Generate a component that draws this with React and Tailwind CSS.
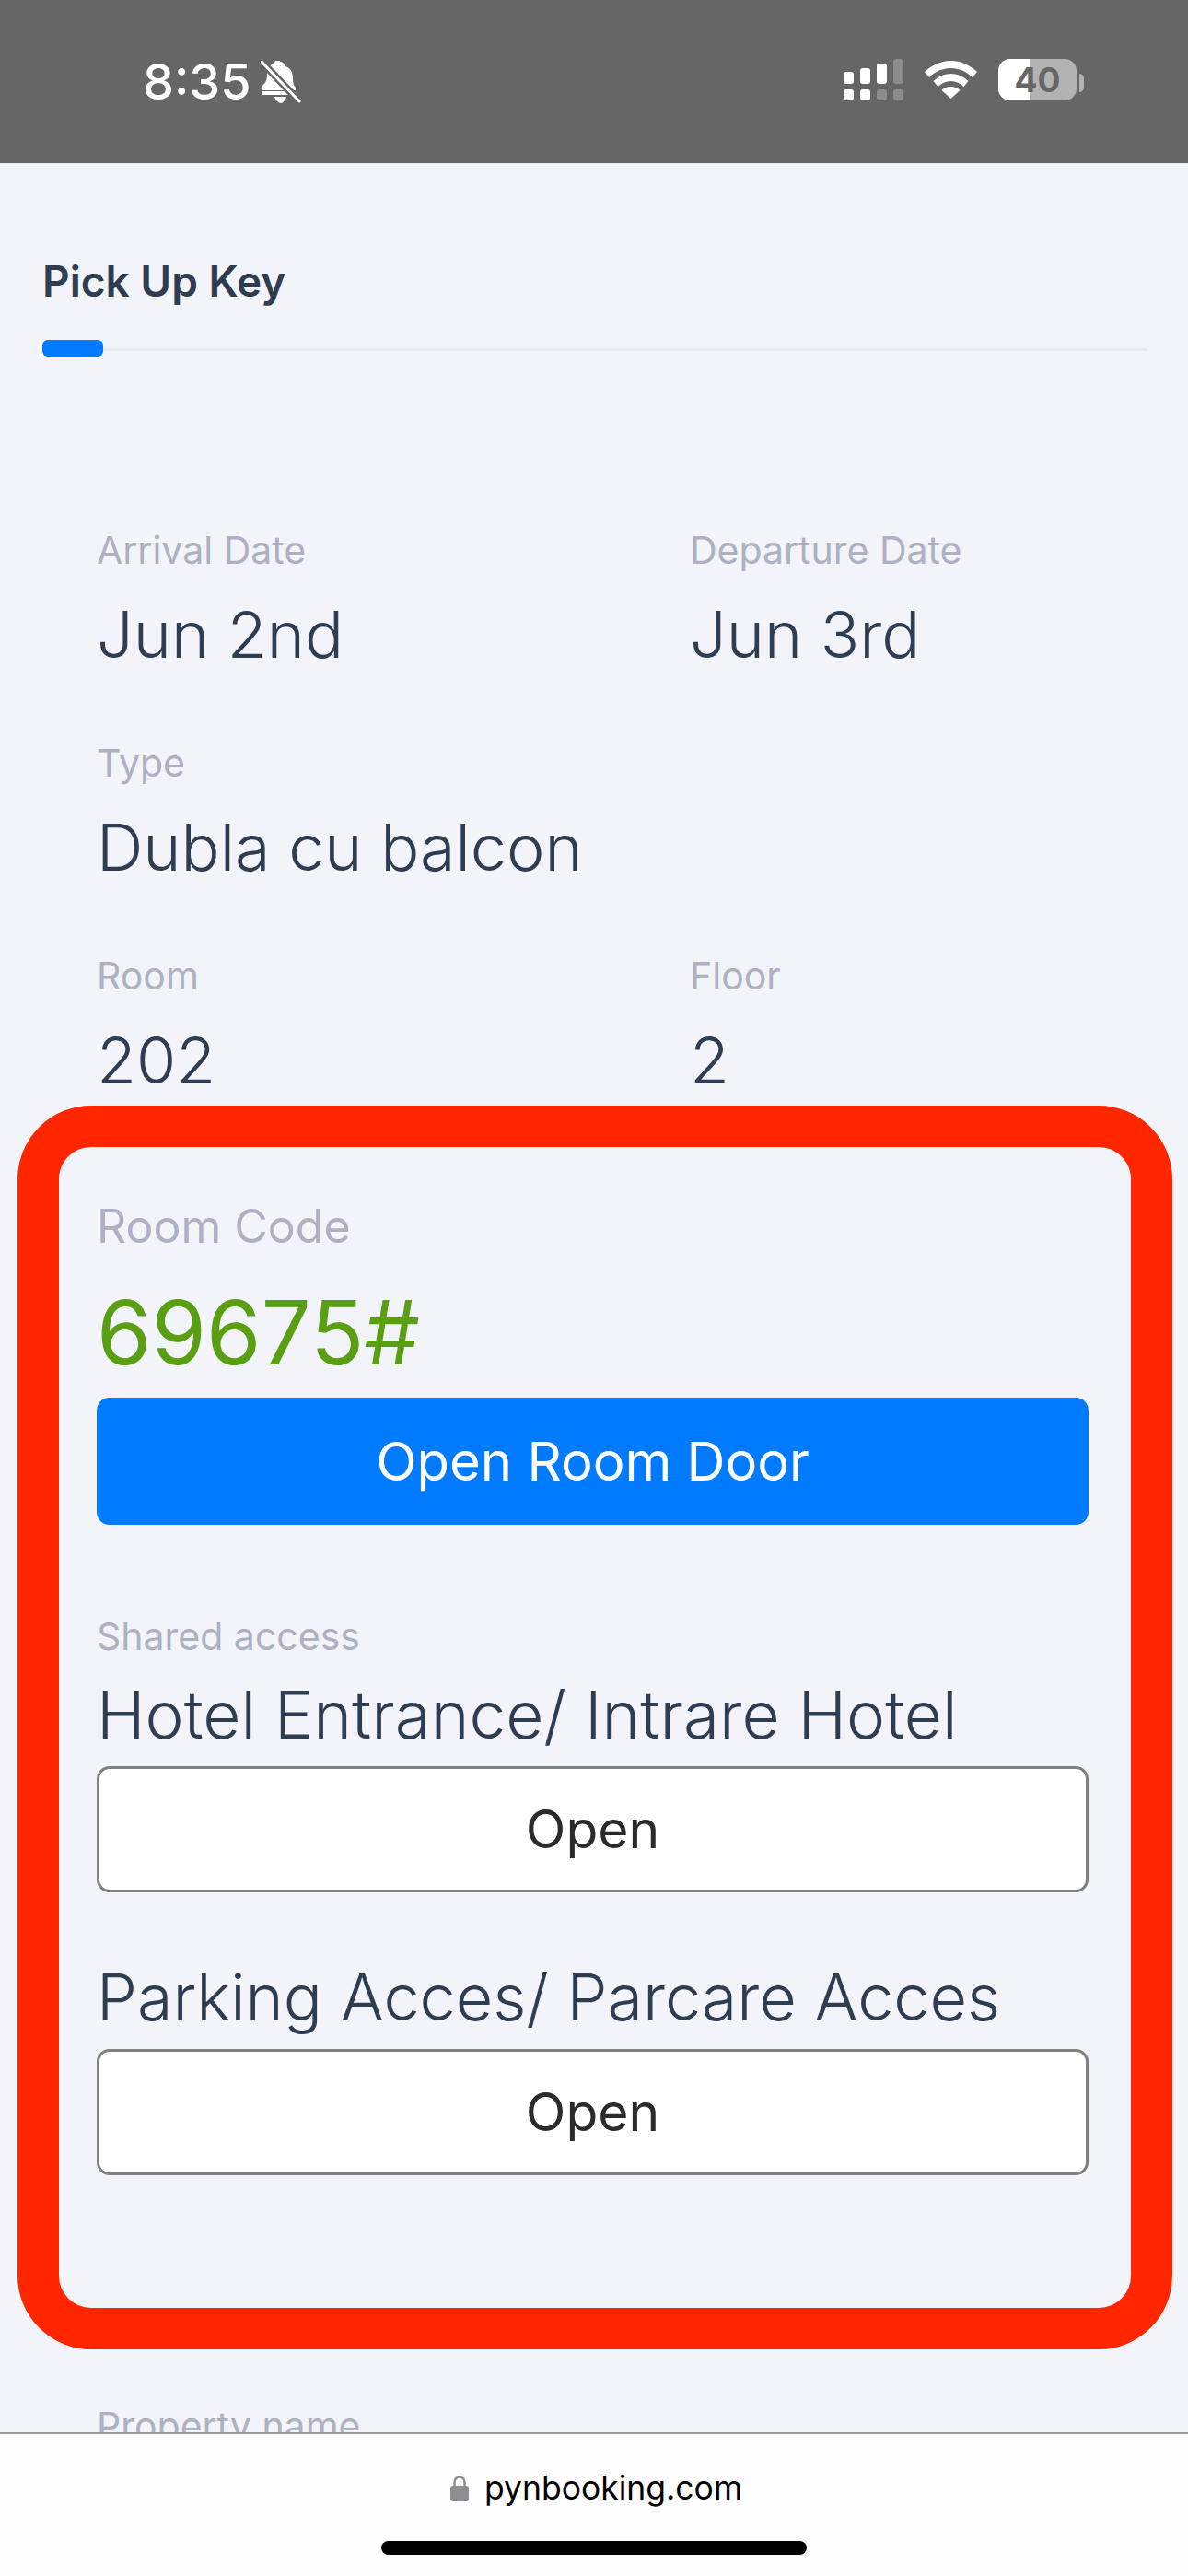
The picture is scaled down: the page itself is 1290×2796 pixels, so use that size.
function StatusBar() {
  return (
    <div className="h-[177px] shrink-0 bg-[#666666] flex items-start text-white">
      <div className="ml-[155px] mt-[57px] flex items-center gap-[10px]">
        <span className="text-[54px] leading-[64px] font-medium font-['Inter',sans-serif]">8:35</span>
        <svg width="44" height="47" viewBox="0 0 44 47" fill="white">
          <path d="M21 1c3 0 5 2 6 5 6 2 8 7 8 13 0 5 1 8 3 10v3H3c-2 0-3-2-2-4 3-3 6-6 6-12 0-7 2-11 8-14 1-3 3-5 6-5z" />
          <path d="M1 37h37l-3-4H1z" />
          <path d="M15 39h13c-1 4-4 7-6 7s-6-3-7-7z" />
          <path d="M1 1l41 43" stroke="#666666" strokeWidth="8" />
          <path d="M1 1l41 43" stroke="white" strokeWidth="3" strokeLinecap="round" />
        </svg>
      </div>
      <div className="ml-auto mr-[113px] mt-[64px] flex items-start">
        <svg width="65" height="45" viewBox="0 0 65 45" fill="white">
          <rect x="0" y="14" width="11" height="13" rx="3" />
          <rect x="18" y="10" width="11" height="17" rx="3" />
          <rect x="36" y="5" width="11" height="22" rx="3" />
          <rect x="54" y="0" width="11" height="27" rx="3" fill="#8c8c8c" />
          <rect x="0" y="33" width="11" height="12" rx="3" />
          <rect x="18" y="33" width="11" height="12" rx="3" />
          <rect x="36" y="33" width="11" height="12" rx="3" fill="#8c8c8c" />
          <rect x="54" y="33" width="11" height="12" rx="3" fill="#8c8c8c" />
        </svg>
        <svg className="ml-[23px] mt-[2px]" width="57" height="41" viewBox="0 0 57 41" fill="white">
          <path d="M28.5 0C39 0 49 4.500 57 12l-5 6C45.500 11.500 37 8 28.500 8S11.500 11.500 5 18l-5-6C8 4.500 18 0 28.500 0z" />
          <path d="M28.500 14c7 0 13.500 2.800 19 8l-5 6c-4-3.800-9-6-14-6s-10 2.200-14 6l-5-6c5.500-5.200 12-8 19-8z" />
          <path d="M28.500 28c3.800 0 7.300 1.300 10 4L28.500 41l-10-9c2.700-2.700 6.200-4 10-4z" />
        </svg>
        <div className="ml-[23px] relative w-[85px] h-[45px] rounded-[13px] overflow-hidden bg-[#b3b3b3]">
          <div className="w-[34px] h-full bg-white" />
          <span className="absolute inset-0 flex items-center justify-center text-[37px] font-bold text-[#666666] font-['Inter',sans-serif]">40</span>
        </div>
        <div className="ml-[3px] mt-[16px] w-[5px] h-[20px] rounded-r-full bg-[#b3b3b3]" />
      </div>
    </div>
  );
}

function Field({ label, value }) {
  return (
    <div>
      <div className="text-[41px] leading-[46px] text-[#adb1c2]">{label}</div>
      <div className="mt-[29px] text-[70px] leading-[80px] font-light text-[#2f3d52]">{value}</div>
    </div>
  );
}

function OpenButton() {
  return (
    <button className="mt-[16px] w-full h-[137px] rounded-[14px] border-[3px] border-[#808080] bg-white text-[57px] text-[#2b2b2b]">
      Open
    </button>
  );
}

function AccessBox() {
  return (
    <div className="mt-[9px] ml-[19px] w-[1254px] h-[1350px] shrink-0 rounded-[80px] border-[45px] border-[#ff2600] pl-[41px] pr-[46px] pt-[56px]">
      <div className="text-[50px] leading-[60px] text-[#adb1c2]">Room Code</div>
      <div className="mt-[30px] text-[96px] leading-[110px] text-[#5a9e14]">69675#</div>
      <button className="mt-[16px] w-full h-[138px] rounded-[14px] bg-[#007aff] text-[58px] text-white">
        Open Room Door
      </button>
      <div className="mt-[98px] text-[41px] leading-[46px] text-[#adb1c2]">Shared access</div>
      <div className="mt-[22px] text-[71px] leading-[80px] font-light text-[#2f3d52]">Hotel Entrance/ Intrare Hotel</div>
      <OpenButton />
      <div className="mt-[74px] text-[70px] leading-[80px] font-light text-[#2f3d52]">Parking Acces/ Parcare Acces</div>
      <OpenButton />
    </div>
  );
}

export default function App() {
  return (
    <div className="w-[1290px] h-[2796px] flex flex-col overflow-hidden bg-[#f3f4f9] font-['Inter',sans-serif]">
      <StatusBar />
      <main className="flex-1 min-h-0 overflow-hidden">
        <div className="pl-[46px] pr-[44px] pt-[100px]">
          <div className="text-[46px] leading-[56px] font-semibold text-[#2f3d52]">Pick Up Key</div>
          <div className="mt-[45px] relative h-[3px] bg-[#e9eaef]">
            <div className="absolute left-0 top-[-9px] w-[66px] h-[18px] rounded-[6px] bg-[#007aff]" />
          </div>
        </div>
        <div className="mt-[193px] pl-[105px] grid grid-cols-[644px_1fr] gap-y-[76px]">
          <Field label="Arrival Date" value="Jun 2nd" />
          <Field label="Departure Date" value="Jun 3rd" />
          <div className="col-span-2">
            <Field label="Type" value="Dubla cu balcon" />
          </div>
          <Field label="Room" value="202" />
          <Field label="Floor" value="2" />
        </div>
        <AccessBox />
        <div className="mt-[60px] pl-[105px] text-[41px] leading-[46px] text-[#adb1c2]">Property name</div>
      </main>
      <footer className="h-[156px] shrink-0 border-t-2 border-[#9a9a9f] bg-[#fdfdfd] flex flex-col items-center">
        <div className="mt-[36px] ml-[5px] flex items-center gap-[17px]">
          <svg width="20" height="28" viewBox="0 0 20 28" fill="#8e8e93">
            <path d="M4.500 13V7a5.500 5.500 0 0 1 11 0v6" fill="none" stroke="#8e8e93" strokeWidth="2.500" />
            <rect x="0" y="11" width="20" height="17" rx="3" />
          </svg>
          <span className="text-[35.500px] leading-[46px] text-black">pynbooking.com</span>
        </div>
        <div className="mt-[34px] w-[462px] h-[15px] rounded-full bg-black" />
      </footer>
    </div>
  );
}
